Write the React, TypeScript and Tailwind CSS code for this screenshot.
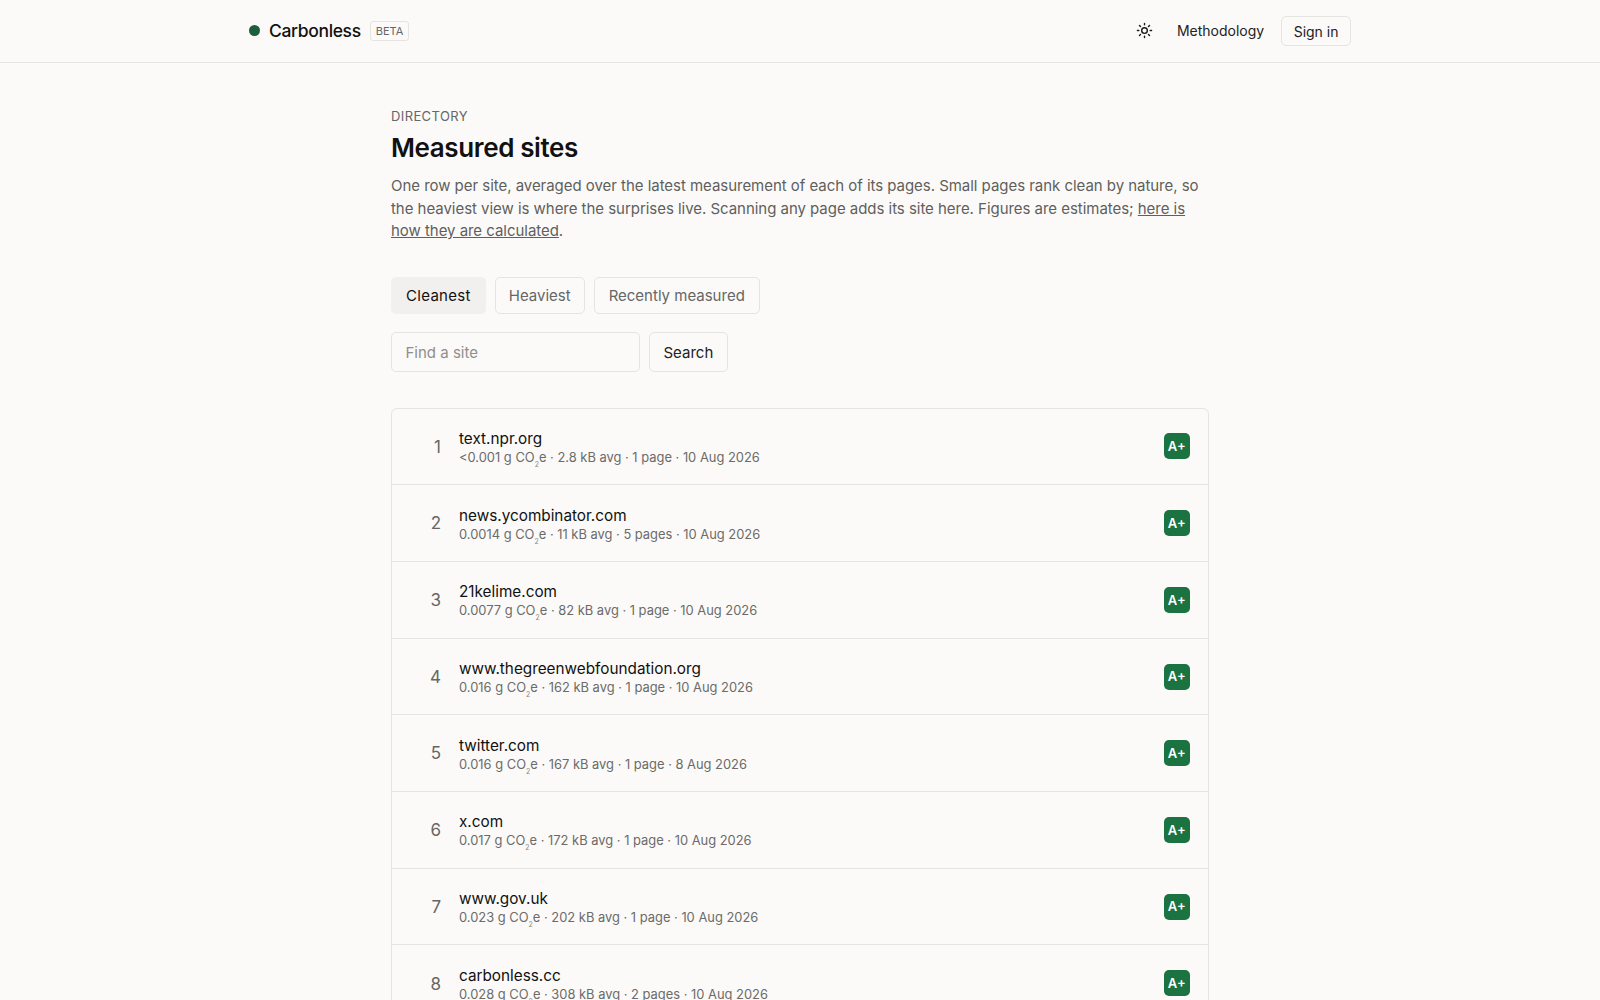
import React from "react";

const rows = [
  ["text.npr.org", "<0.001 g CO", "e · 2.8 kB avg · 1 page · 10 Aug 2026"],
  ["news.ycombinator.com", "0.0014 g CO", "e · 11 kB avg · 5 pages · 10 Aug 2026"],
  ["21kelime.com", "0.0077 g CO", "e · 82 kB avg · 1 page · 10 Aug 2026"],
  ["www.thegreenwebfoundation.org", "0.016 g CO", "e · 162 kB avg · 1 page · 10 Aug 2026"],
  ["twitter.com", "0.016 g CO", "e · 167 kB avg · 1 page · 8 Aug 2026"],
  ["x.com", "0.017 g CO", "e · 172 kB avg · 1 page · 10 Aug 2026"],
  ["www.gov.uk", "0.023 g CO", "e · 202 kB avg · 1 page · 10 Aug 2026"],
  ["carbonless.cc", "0.028 g CO", "e · 308 kB avg · 2 pages · 10 Aug 2026"],
];

function Sun() {
  return (
    <svg width="17" height="17" viewBox="0 0 24 24" fill="none" stroke="#1a1a1a" strokeWidth="2" strokeLinecap="round">
      <circle cx="12" cy="12" r="4" />
      <path d="M12 2v2M12 20v2M4.93 4.93l1.41 1.41M17.66 17.66l1.41 1.41M2 12h2M20 12h2M6.34 17.66l-1.41 1.41M19.07 4.93l-1.41 1.41" />
    </svg>
  );
}

export default function App() {
  return (
    <div className="h-[1000px] overflow-hidden bg-[#fbfaf8] font-['Inter',sans-serif] text-[#111]">
      <header className="h-[63px] border-b border-[#e5e4e1]">
        <div className="mx-auto flex h-[61.5px] w-[1102px] items-center justify-between">
          <div className="flex items-center">
            <span className="h-[11px] w-[11px] rounded-full bg-[#1d5e3c]" />
            <span className="ml-[9px] text-[17.5px] font-medium tracking-[-0.02em]">Carbonless</span>
            <span className="ml-[9px] rounded-[3px] border border-[#e5e4e1] px-[5px] py-[2px] text-[11px] leading-[14px] text-[#666]">BETA</span>
          </div>
          <div className="flex items-center">
            <Sun />
            <span className="ml-[24px] text-[14px] text-[#222]">Methodology</span>
            <span className="ml-[17px] mt-[1px] flex h-[30px] items-center rounded-[5px] border border-[#e5e4e1] px-[11.5px] text-[14px] text-[#222]">Sign in</span>
          </div>
        </div>
      </header>
      <main className="mx-auto w-[818px] pt-[44px]">
        <div className="text-[13px] leading-[19px] tracking-[0.03em] text-[#666]">DIRECTORY</div>
        <h1 className="mt-[5px] text-[26px] font-semibold leading-[34px] tracking-[-0.015em]">Measured sites</h1>
        <p className="mt-[10.4px] text-[15px] leading-[22.4px] tracking-[-0.0025em] text-[#5f5f5d]">
          One row per site, averaged over the latest measurement of each of its pages. Small pages rank clean by nature, so the heaviest view is where the surprises live. Scanning any page adds its site here. Figures are estimates; <span className="underline">here is how they are calculated</span>.
        </p>
        <div className="mt-[34px] flex gap-[9px] text-[15px]">
          <span className="flex h-[37px] items-center rounded-[5px] bg-[#f1f0ee] px-[15px] pt-[2px] tracking-[0.02em] text-[#111]">Cleanest</span>
          <span className="flex h-[37px] items-center rounded-[5px] border border-[#e5e4e1] px-[13px] pt-[2px] text-[#666]">Heaviest</span>
          <span className="flex h-[37px] items-center rounded-[5px] border border-[#e5e4e1] px-[14px] pt-[2px] text-[#666]">Recently measured</span>
        </div>
        <div className="mt-[18px] flex gap-[9px] text-[15px]">
          <div className="flex h-[40px] w-[249px] items-center rounded-[5px] border border-[#e5e4e1] px-[13.5px] pt-[3px] text-[#8f8f8d]">Find a site</div>
          <div className="flex h-[40px] items-center rounded-[5px] border border-[#e5e4e1] px-[13.5px] pt-[3px] text-[#222]">Search</div>
        </div>
        <div className="mt-[36px] rounded-t-[6px] border border-[#e5e4e1]">
          {rows.map((r, i) => (
            <div key={r[0]} className={`flex items-center pr-[18px] ${i ? "h-[76.7px] border-t border-[#e5e4e1]" : "h-[75.7px]"}`}>
              <span className="w-[67px] pt-[2px] pr-[18px] text-right text-[17px] text-[#666]">{i + 1}</span>
              <div className="min-w-0 flex-1 pt-[3px]">
                <div className="text-[15.3px] leading-[20px] text-[#111]">{r[0]}</div>
                <div className="text-[12.9px] leading-[18px] text-[#6b6b69]">
                  {r[1]}
                  <sub className="bottom-[-5px] text-[7px] text-[#888]">2</sub>
                  {r[2]}
                </div>
              </div>
              <span className="flex h-[26px] w-[26.5px] items-center justify-center rounded-[5px] bg-[#1a7341] pt-[1px] text-[13px] font-semibold text-white">A+</span>
            </div>
          ))}
        </div>
      </main>
    </div>
  );
}
